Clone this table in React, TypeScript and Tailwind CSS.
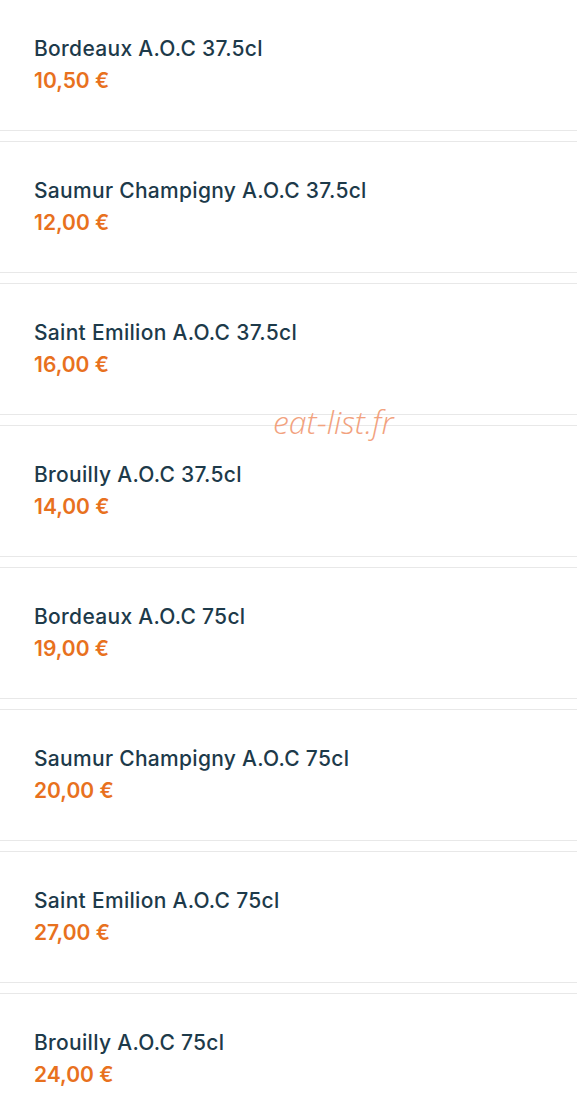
const wines = [
  { name: 'Bordeaux A.O.C 37.5cl', price: '10,50 €' },
  { name: 'Saumur Champigny A.O.C 37.5cl', price: '12,00 €' },
  { name: 'Saint Emilion A.O.C 37.5cl', price: '16,00 €' },
  { name: 'Brouilly A.O.C 37.5cl', price: '14,00 €' },
  { name: 'Bordeaux A.O.C 75cl', price: '19,00 €' },
  { name: 'Saumur Champigny A.O.C 75cl', price: '20,00 €' },
  { name: 'Saint Emilion A.O.C 75cl', price: '27,00 €' },
  { name: 'Brouilly A.O.C 75cl', price: '24,00 €' },
];

export default function App() {
  return (
    <div className="relative min-h-screen overflow-hidden bg-white font-['Inter',sans-serif]">
      <div className="-mt-px flex flex-col gap-[10px]">
        {wines.map((wine, i) => (
          <div key={i} className="h-[132px] border-y border-[#e8e8e8] bg-white px-[34px] pt-[35px]">
            <div className="text-[21px] font-medium leading-[28px] tracking-[0.3px] text-[#1d3a4a]">{wine.name}</div>
            <div className="mt-[4px] text-[21px] font-semibold leading-[28px] text-[#e8711e]">{wine.price}</div>
          </div>
        ))}
      </div>

      {/* watermark */}
      <div className="pointer-events-none absolute left-[273px] top-[398px] font-['Open_Sans',sans-serif] text-[32px] font-light italic text-[#f2a27e]">
        eat-list.fr
      </div>
    </div>
  );
}
